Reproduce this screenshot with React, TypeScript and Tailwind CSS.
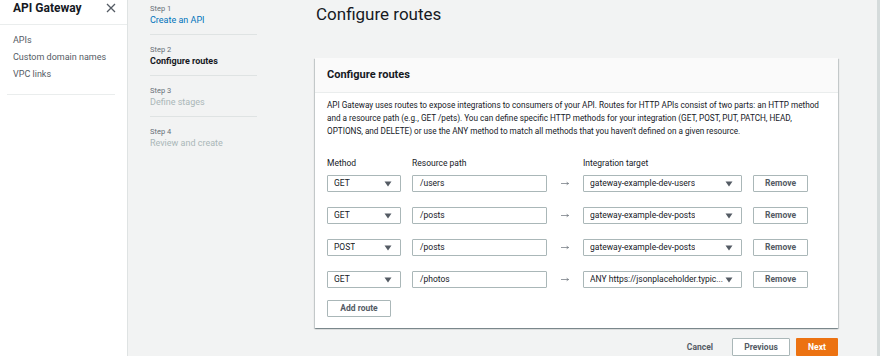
import React from "react";

const font = { fontFamily: "Roboto, 'Liberation Sans', sans-serif" };

function Caret() {
  return (
    <svg width="8" height="6" viewBox="0 0 8 6" className="shrink-0">
      <path d="M0.5 0.5 L7.5 0.5 L4 5.5 Z" fill="#545b64" />
    </svg>
  );
}

function Select({ value, w }: { value: string; w: string }) {
  return (
    <div className={`${w} h-[17px] border border-[#aab7b8] bg-white rounded-[1px] flex items-center justify-between pl-[6px] pr-[8px] text-[8.5px] text-[#16191f]`}>
      <span className="truncate">{value}</span>
      <Caret />
    </div>
  );
}

function Arrow() {
  return (
    <div className="w-[36px] flex justify-center">
      <svg width="8" height="5" viewBox="0 0 8 5">
        <path d="M0 2.5 H7.5" stroke="#687078" strokeWidth="0.7" />
        <path d="M5.6 1.2 L7.6 2.5 L5.6 3.8" stroke="#687078" strokeWidth="0.7" fill="none" />
      </svg>
    </div>
  );
}

function Row({ method, path, target }: { method: string; path: string; target: string }) {
  return (
    <div className="flex items-center h-[17px]">
      <Select value={method} w="w-[74px]" />
      <div className="ml-[11px] w-[135px] h-[17px] border border-[#aab7b8] bg-white rounded-[1px] flex items-center pl-[7px] text-[8.5px] text-[#16191f]">
        {path}
      </div>
      <Arrow />
      <Select value={target} w="w-[159px]" />
      <div className="ml-[11px] w-[55px] h-[17px] border border-[#aab7b8] bg-white rounded-[1px] flex items-center justify-center text-[8.5px] font-bold text-[#545b64]">
        Remove
      </div>
    </div>
  );
}

const steps = [
  { s: "Step 1", n: "Create an API", c: "text-[#0073bb]" },
  { s: "Step 2", n: "Configure routes", c: "text-[#16191f] font-bold" },
  { s: "Step 3", n: "Define stages", c: "text-[#aab7b8]" },
  { s: "Step 4", n: "Review and create", c: "text-[#aab7b8]" },
];

export default function App() {
  return (
    <div style={font} className="w-[880px] h-[356px] flex overflow-hidden bg-[#f2f3f3]">
      {/* Sidebar */}
      <div className="w-[128px] h-full bg-white border-r border-[#dfe3e3] flex flex-col shrink-0">
        <div className="h-[25px] flex items-center justify-between pl-[13px] pr-[11px] border-b border-[#eaeded]">
          <span className="text-[12px] font-bold text-[#16191f] -mt-[8px]">API Gateway</span>
          <svg width="10" height="10" viewBox="0 0 10 10" className="-mt-[9px]">
            <path d="M1 1 L9 9 M9 1 L1 9" stroke="#545b64" strokeWidth="1.3" />
          </svg>
        </div>
        <div className="pl-[13px] pt-[10px] flex flex-col gap-[6px] text-[9px] text-[#545b64] leading-[11px]">
          <span>APIs</span>
          <span>Custom domain names</span>
          <span>VPC links</span>
        </div>
        <div className="mx-[7px] w-[108px] mt-[14px] border-t border-[#eaeded]" />
      </div>

      {/* Steps */}
      <div className="ml-[22px] w-[107px] shrink-0 flex flex-col">
        {steps.map((st, i) => (
          <div
            key={i}
            className={`flex flex-col ${i < 3 ? "border-b border-[#dfe3e3]" : ""} ${i === 0 ? "h-[35px] pt-[4px]" : "h-[41px] pt-[10px]"}`}
          >
            <span className="text-[7.5px] leading-[10px] text-[#687078]">{st.s}</span>
            <span className={`text-[9px] leading-[13px] ${st.c}`}>{st.n}</span>
          </div>
        ))}
      </div>

      {/* Main */}
      <div className="ml-[58px] w-[523px] shrink-0 flex flex-col">
        <h1 className="text-[17px] leading-[22px] text-[#16191f] mt-[3px] ml-[1px]">Configure routes</h1>
        <div className="mt-[33px] bg-white shadow-[0_1px_1px_0_rgba(0,28,36,0.3),1px_1px_1px_0_rgba(0,28,36,0.15),-1px_1px_1px_0_rgba(0,28,36,0.15)]">
          <div className="h-[35px] bg-[#fafafa] border-b border-[#eaeded] flex items-center pl-[12px]">
            <span className="text-[11px] font-bold text-[#16191f]">Configure routes</span>
          </div>
          <div className="px-[12px] pt-[6px] pb-[11px]">
            <p className="text-[8.2px] leading-[13px] text-[#16191f] whitespace-nowrap">
              API Gateway uses routes to expose integrations to consumers of your API. Routes for HTTP APIs consist of two parts: an HTTP method
              <br />
              and a resource path (e.g., GET /pets). You can define specific HTTP methods for your integration (GET, POST, PUT, PATCH, HEAD,
              <br />
              OPTIONS, and DELETE) or use the ANY method to match all methods that you haven't defined on a given resource.
            </p>
            <div className="mt-[20px] flex text-[8.5px] text-[#16191f] leading-[11px]">
              <span className="w-[85px]">Method</span>
              <span className="w-[171px]">Resource path</span>
              <span>Integration target</span>
            </div>
            <div className="mt-[6px] flex flex-col gap-[15px]">
              <Row method="GET" path="/users" target="gateway-example-dev-users" />
              <Row method="GET" path="/posts" target="gateway-example-dev-posts" />
              <Row method="POST" path="/posts" target="gateway-example-dev-posts" />
              <Row method="GET" path="/photos" target="ANY https://jsonplaceholder.typic..." />
            </div>
            <div className="mt-[12px] w-[64px] h-[17px] border border-[#aab7b8] bg-white rounded-[1px] flex items-center justify-center text-[8.5px] font-bold text-[#545b64]">
              Add route
            </div>
          </div>
        </div>
        <div className="mt-[10px] flex items-center justify-end">
          <span className="text-[8.5px] font-bold text-[#545b64] mr-[19px]">Cancel</span>
          <div className="w-[58px] h-[18px] border border-[#aab7b8] bg-white rounded-[1px] flex items-center justify-center text-[8.5px] font-bold text-[#545b64]">
            Previous
          </div>
          <div className="ml-[6px] w-[42px] h-[18px] bg-[#ec7211] rounded-[1px] flex items-center justify-center text-[8.5px] font-bold text-white">
            Next
          </div>
        </div>
      </div>
      <div className="ml-auto w-[3px] h-full bg-[#d5dbdb]" />
    </div>
  );
}
